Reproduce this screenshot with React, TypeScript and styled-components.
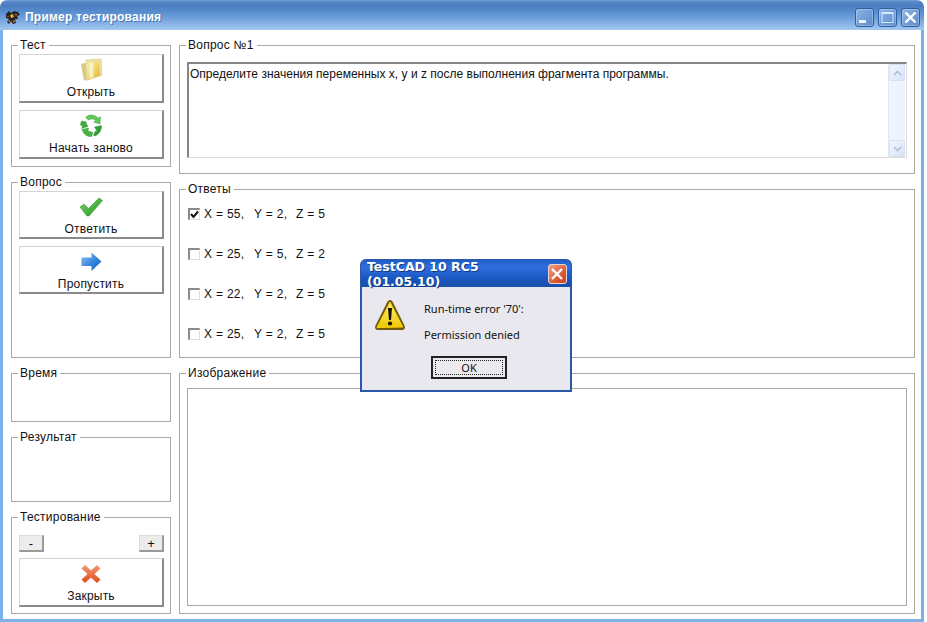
import React from "react";
import styled, { createGlobalStyle } from "styled-components";

const Global = createGlobalStyle`
  html, body { margin: 0; padding: 0; background: #fff; width: 927px; height: 622px; overflow: hidden; }
  * { box-sizing: border-box; }
`;

const Page = styled.div`
  position: relative;
  width: 927px;
  height: 622px;
  background: #fff;
  font-family: "Liberation Sans", Arial, sans-serif;
  font-size: 12px;
  color: #111;
`;

const Win = styled.div`
  width: 924px;
  height: 622px;
  display: flex;
  flex-direction: column;
  border-radius: 7px 7px 0 0;
  overflow: hidden;
  background: #fff;
`;

const TitleBar = styled.div`
  height: 30px;
  flex: none;
  display: flex;
  align-items: center;
  padding: 3px 4px 0 5px;
  background: linear-gradient(180deg, #5b8ccb 0%, #4a7cbe 15%, #5f93d3 45%, #84afe4 75%, #a4c6f0 100%);
  border-top: 1px solid #6f9ad4;
`;

const TitleText = styled.div`
  margin-left: 4px;
  flex: 1;
  font-weight: bold;
  font-size: 12px;
  color: #fff;
  text-shadow: 1px 1px 0 #4a78b4;
  letter-spacing: 0.22px;
`;

const CtlButton = styled.div`
  width: 19px;
  height: 19px;
  margin-left: 4px;
  border: 1px solid #2f5f9f;
  border-radius: 3px;
  background: linear-gradient(135deg, #8eb4e6 0%, #6f9bd8 60%, #5f8ccb 100%);
  box-shadow: inset 0 0 0 1px rgba(255, 255, 255, 0.25);
  display: flex;
  align-items: center;
  justify-content: center;
`;

const Body = styled.div`
  flex: 1;
  display: flex;
  gap: 8px;
  padding: 15px 6px 5px 8px;
  border-left: 3px solid #7db1ea;
  border-right: 3px solid #7db1ea;
  border-bottom: 3px solid #7db1ea;
  min-height: 0;
`;

const LeftCol = styled.div`
  width: 160px;
  display: flex;
  flex-direction: column;
  gap: 15px;
`;

const RightCol = styled.div`
  flex: 1;
  display: flex;
  flex-direction: column;
  gap: 15px;
`;

const Group = styled.section<{ $h: number }>`
  position: relative;
  height: ${(p) => p.$h}px;
  flex: none;
  border: 1px solid #a9a7a7;
`;

const Legend = styled.span`
  position: absolute;
  top: -8px;
  left: 6px;
  padding: 0 3px 0 2px;
  background: #fff;
  line-height: 14px;
  letter-spacing: 0.25px;
`;

const ButtonStack = styled.div`
  display: flex;
  flex-direction: column;
  gap: 7px;
  padding: 8px 6px 0 7px;
`;

const BigButton = styled.div<{ $h?: number }>`
  height: ${(p) => p.$h ?? 49}px;
  width: 145px;
  background: #fff;
  border-top: 1px solid #d4d4d4;
  border-left: 1px solid #d4d4d4;
  border-right: 2px solid #8a8a8a;
  border-bottom: 2px solid #8a8a8a;
  display: flex;
  flex-direction: column;
  align-items: center;
  padding-top: 3px;
  letter-spacing: 0.2px;
`;

const IconSlot = styled.div`
  height: 24px;
  display: flex;
  align-items: center;
  justify-content: center;
  margin-bottom: 3px;
`;

const TestBody = styled.div`
  padding: 17px 6px 0 7px;
  display: flex;
  flex-direction: column;
  gap: 6px;
`;

const PlusRow = styled.div`
  display: flex;
  justify-content: space-between;
  width: 145px;
`;

const SmallButton = styled.div`
  width: 25px;
  height: 17px;
  background: #ececec;
  border-top: 1px solid #dcdcdc;
  border-left: 1px solid #dcdcdc;
  border-right: 2px solid #9a9a9a;
  border-bottom: 2px solid #9a9a9a;
  display: flex;
  align-items: center;
  justify-content: center;
  font-size: 13px;
  line-height: 1;
`;

const QuestionBox = styled.div`
  margin: 16px 7px 0 7px;
  height: 96px;
  display: flex;
  border-top: 2px solid #858585;
  border-left: 2px solid #858585;
  border-right: 1px solid #dcdcdc;
  border-bottom: 1px solid #dcdcdc;
`;

const QuestionText = styled.div`
  flex: 1;
  padding: 3px 0 0 1px;
  line-height: 14px;
  letter-spacing: 0.01px;
`;

const Scrollbar = styled.div`
  width: 17px;
  margin-right: 1px;
  background: #eef4fd;
  display: flex;
  flex-direction: column;
  justify-content: space-between;
  border-left: 1px solid #dfe8f6;
`;

const ScrollBtn = styled.div`
  height: 17px;
  background: linear-gradient(135deg, #f2f6fd, #d6e3f7);
  border: 1px solid #d5e1f3;
  border-radius: 2px;
  display: flex;
  align-items: center;
  justify-content: center;
`;

const AnswerList = styled.div`
  padding: 4px 0 0 8px;
  display: flex;
  flex-direction: column;
`;

const AnswerRow = styled.div`
  height: 40px;
  display: flex;
  align-items: center;
  letter-spacing: 0.3px;
`;

const CheckBox = styled.div`
  width: 12px;
  height: 12px;
  margin-right: 4px;
  border-top: 2px solid #8a8a8a;
  border-left: 2px solid #8a8a8a;
  border-right: 1px solid #dedede;
  border-bottom: 1px solid #dedede;
  background: #fff;
  display: flex;
  align-items: center;
  justify-content: center;
`;

const Cell = styled.span<{ $w: number }>`
  width: ${(p) => p.$w}px;
  white-space: pre;
`;

const ImageBox = styled.div`
  margin: 14px 7px 0 7px;
  height: 218px;
  border: 1px solid #a9a7a7;
`;

const Dialog = styled.div`
  position: absolute;
  left: 360px;
  top: 259px;
  width: 212px;
  height: 133px;
  border: 2px solid #2a57a6;
  border-radius: 6px 6px 0 0;
  background: #e9e8ee;
  box-shadow: 0 0 0 0 transparent;
  display: flex;
  flex-direction: column;
  font-family: "Noto Sans", Tahoma, sans-serif;
`;

const DialogTitle = styled.div`
  height: 27px;
  flex: none;
  margin: -1px -1px 0;
  padding: 0 4px 0 6px;
  display: flex;
  align-items: center;
  justify-content: space-between;
  background: linear-gradient(180deg, #1f5bc4 0%, #2f6fe0 25%, #1a56c0 70%, #1a4fa8 100%);
  border-radius: 6px 6px 0 0;
  color: #fff;
  font-family: "DejaVu Sans", Verdana, sans-serif;
  font-weight: bold;
  font-size: 12.5px;
  text-shadow: 1px 1px 0 #123a80;
`;

const DialogClose = styled.div`
  width: 20px;
  height: 20px;
  border: 1px solid #e8d8d0;
  border-radius: 3px;
  background: linear-gradient(135deg, #eda08a, #d9532e 70%, #c8452a);
  display: flex;
  align-items: center;
  justify-content: center;
`;

const DialogBody = styled.div`
  flex: 1;
  display: flex;
  padding: 12px 0 0 12px;
`;

const MsgCol = styled.div`
  margin-left: 18px;
  font-size: 11px;
  line-height: 15px;
  display: flex;
  flex-direction: column;
  gap: 11px;
  padding-top: 2px;
  color: #111;
`;

const DialogFoot = styled.div`
  display: flex;
  justify-content: center;
  padding: 0 0 11px 6px;
`;

const OkButton = styled.div`
  width: 76px;
  height: 23px;
  border: 2px solid #222;
  background: #eceaee;
  padding: 2px;
  font-size: 11px;
`;

const OkInner = styled.div`
  height: 100%;
  border: 1px dotted #222;
  display: flex;
  align-items: center;
  justify-content: center;
`;

const WindowIcon = () => (
  <svg width="16" height="15" viewBox="0 0 16 15">
    <path d="M1 4 L4 1 L6 3 L9 1 L13 2 L15 5 L12 6 L13 9 L10 9 L11 13 L8 14 L6 11 L4 14 L2 12 L4 9 L1 8 Z" fill="#2a2220" />
    <path d="M5 5 L8 4 L9 7 L6 8 Z" fill="#d8b040" />
    <path d="M10 4 L12 4 L11 6 Z M3 11 L5 10 L5 12 Z M8 10 L10 11 L9 13 Z" fill="#c9a26a" />
    <path d="M2 6 L4 6 L4 7 L2 7 Z" fill="#b83a20" />
  </svg>
);

const FolderIcon = () => (
  <svg width="24" height="24" viewBox="0 0 24 24">
    <defs>
      <linearGradient id="fo" x1="0" y1="0" x2="1" y2="0.6">
        <stop offset="0" stopColor="#f6edc0" />
        <stop offset="0.55" stopColor="#f3e08a" />
        <stop offset="1" stopColor="#e7c23e" />
      </linearGradient>
    </defs>
    <path d="M7 2 L22 1 L23 17 L8 22 Z" fill="#efe0a2" stroke="#cdbb78" strokeWidth="0.5" />
    <path d="M2 6 L6 5 L7 4 L14 3 L14 5 L20 4 L21 18 L6 23 L4 20 Z" fill="url(#fo)" />
    <path d="M2 6 L7 5 L8 22 L5 22 Z" fill="#d8c98e" />
    <path d="M10 5 L14 4.5 L14.5 19 L10.5 20.5 Z" fill="#fbf6d8" opacity="0.8" />
  </svg>
);

const RecycleIcon = () => (
  <svg width="24" height="24" viewBox="0 0 24 24">
    <g fill="#3fae3c" stroke="#2c8a2c" strokeWidth="0.4">
      <path d="M9 1.5 C13 0.5 17 1.5 19 4 L21.5 2.8 L21 10 L14.5 8 L16.8 6.5 C15 4.6 12 4.5 9.5 6 L6.5 3.5 Z" fill="#63c957" />
      <path d="M2.8 7 L7.5 8 L7 9 L9 12.5 L2.5 14.5 L3.5 12 L1.5 11 C1.5 9.5 2 8 2.8 7 Z" fill="#3fae3c" />
      <path d="M3 15.5 L9.5 14 L9 17 L14 18.5 L12.5 22.5 C8 23 4.8 20.5 3 15.5 Z" fill="#44b53f" />
      <path d="M15.5 13 L22.5 11.5 C22.8 16 20 20.5 16 22 L14.5 21.5 L16 17.5 L18 17 Z" fill="#2f9e32" />
    </g>
  </svg>
);

const CheckIcon = () => (
  <svg width="24" height="20" viewBox="0 0 24 20">
    <defs>
      <linearGradient id="ck" x1="0" y1="0" x2="1" y2="1">
        <stop offset="0" stopColor="#7fcf5f" />
        <stop offset="1" stopColor="#1f9a25" />
      </linearGradient>
    </defs>
    <path d="M1 10 L5 7 L9.5 11.5 L20 1 L23.5 3.5 L10 19 L8 19 Z" fill="url(#ck)" stroke="#2a8a2a" strokeWidth="0.5" />
  </svg>
);

const ArrowIcon = () => (
  <svg width="21" height="20" viewBox="0 0 21 20">
    <defs>
      <linearGradient id="ar" x1="0" y1="0" x2="1" y2="1">
        <stop offset="0" stopColor="#8fc4f4" />
        <stop offset="0.6" stopColor="#2f7fdc" />
        <stop offset="1" stopColor="#1c5fb8" />
      </linearGradient>
    </defs>
    <path d="M0.5 5.5 L10.5 5.5 L10.5 0.5 L20.5 9.5 L10.5 19 L10.5 14 L0.5 14 Z" fill="url(#ar)" />
  </svg>
);

const CrossIcon = () => (
  <svg width="20" height="20" viewBox="0 0 20 20">
    <defs>
      <linearGradient id="cr" x1="0" y1="0" x2="0" y2="1">
        <stop offset="0" stopColor="#ef9a72" />
        <stop offset="1" stopColor="#e04a1c" />
      </linearGradient>
    </defs>
    <path d="M4 1 L10 6.5 L16 1 L19.5 4.5 L13.5 10 L19.5 15.5 L16 19 L10 13.5 L4 19 L0.5 15.5 L6.5 10 L0.5 4.5 Z" fill="url(#cr)" />
  </svg>
);

const WarnIcon = () => (
  <svg width="32" height="32" viewBox="0 0 32 32">
    <defs>
      <linearGradient id="wn" x1="0" y1="0" x2="0" y2="1">
        <stop offset="0" stopColor="#fff27a" />
        <stop offset="1" stopColor="#f0c800" />
      </linearGradient>
    </defs>
    <path d="M16 1 C17.5 1 18.5 2.5 19.5 4.5 L30.5 26.5 C31.5 29 30.5 31 28 31 L4 31 C1.5 31 0.5 29 1.5 26.5 L12.5 4.5 C13.5 2.5 14.5 1 16 1 Z" fill="#6f5a10" />
    <path d="M16 3 L28.8 28 L3 28.5 Z" fill="url(#wn)" stroke="#f4d20a" strokeWidth="1" strokeLinejoin="round" />
    <path d="M14 9 L18 9 L17 21 L15 21 Z" fill="#111" />
    <circle cx="16" cy="24.5" r="2.1" fill="#111" />
  </svg>
);

const Chevron = ({ up }: { up?: boolean }) => (
  <svg width="9" height="6" viewBox="0 0 9 6">
    <path d={up ? "M1 5 L4.5 1.5 L8 5" : "M1 1 L4.5 4.5 L8 1"} fill="none" stroke="#a9bedd" strokeWidth="1.6" />
  </svg>
);

const answers = [
  { x: "X = 55,", y: "Y = 2,", z: "Z = 5", checked: true },
  { x: "X = 25,", y: "Y = 5,", z: "Z = 2", checked: false },
  { x: "X = 22,", y: "Y = 2,", z: "Z = 5", checked: false },
  { x: "X = 25,", y: "Y = 2,", z: "Z = 5", checked: false },
];

export default function App() {
  return (
    <Page>
      <Global />
      <Win>
        <TitleBar>
          <WindowIcon />
          <TitleText>Пример тестирования</TitleText>
          <CtlButton>
            <svg width="13" height="13" viewBox="0 0 13 13">
              <rect x="1" y="9" width="7" height="3" fill="#fff" opacity="0.9" />
            </svg>
          </CtlButton>
          <CtlButton>
            <svg width="13" height="13" viewBox="0 0 13 13">
              <rect x="1" y="1.5" width="11" height="10" fill="none" stroke="#dbe8fa" strokeWidth="1" />
              <rect x="1" y="1" width="11" height="2" fill="#dbe8fa" />
            </svg>
          </CtlButton>
          <CtlButton>
            <svg width="13" height="13" viewBox="0 0 13 13">
              <path d="M1.5 1.5 L11.5 11.5 M11.5 1.5 L1.5 11.5" stroke="#fff" strokeWidth="2.4" />
            </svg>
          </CtlButton>
        </TitleBar>
        <Body>
          <LeftCol>
            <Group $h={122}>
              <Legend>Тест</Legend>
              <ButtonStack>
                <BigButton>
                  <IconSlot><FolderIcon /></IconSlot>
                  Открыть
                </BigButton>
                <BigButton>
                  <IconSlot><RecycleIcon /></IconSlot>
                  Начать заново
                </BigButton>
              </ButtonStack>
            </Group>
            <Group $h={176}>
              <Legend>Вопрос</Legend>
              <ButtonStack>
                <BigButton $h={48}>
                  <IconSlot><CheckIcon /></IconSlot>
                  Ответить
                </BigButton>
                <BigButton $h={48}>
                  <IconSlot><ArrowIcon /></IconSlot>
                  Пропустить
                </BigButton>
              </ButtonStack>
            </Group>
            <Group $h={49}>
              <Legend>Время</Legend>
            </Group>
            <Group $h={65}>
              <Legend>Результат</Legend>
            </Group>
            <Group $h={97}>
              <Legend>Тестирование</Legend>
              <TestBody>
                <PlusRow>
                  <SmallButton>-</SmallButton>
                  <SmallButton>+</SmallButton>
                </PlusRow>
                <BigButton $h={49}>
                  <IconSlot><CrossIcon /></IconSlot>
                  Закрыть
                </BigButton>
              </TestBody>
            </Group>
          </LeftCol>
          <RightCol>
            <Group $h={129}>
              <Legend>Вопрос №1</Legend>
              <QuestionBox>
                <QuestionText>
                  Определите значения переменных x, y и z после выполнения фрагмента программы.
                </QuestionText>
                <Scrollbar>
                  <ScrollBtn><Chevron up /></ScrollBtn>
                  <ScrollBtn><Chevron /></ScrollBtn>
                </Scrollbar>
              </QuestionBox>
            </Group>
            <Group $h={169}>
              <Legend>Ответы</Legend>
              <AnswerList>
                {answers.map((a, i) => (
                  <AnswerRow key={i}>
                    <CheckBox>
                      {a.checked && (
                        <svg width="9" height="9" viewBox="0 0 9 9">
                          <path d="M1 4 L3.5 7 L8 1.5" fill="none" stroke="#111" strokeWidth="2" />
                        </svg>
                      )}
                    </CheckBox>
                    <Cell $w={50}>{a.x}</Cell>
                    <Cell $w={42}>{a.y}</Cell>
                    <Cell $w={40}>{a.z}</Cell>
                  </AnswerRow>
                ))}
              </AnswerList>
            </Group>
            <Group $h={241}>
              <Legend>Изображение</Legend>
              <ImageBox />
            </Group>
          </RightCol>
        </Body>
      </Win>
      <Dialog>
        <DialogTitle>
          TestCAD 10 RC5 (01.05.10)
          <DialogClose>
            <svg width="14" height="14" viewBox="0 0 14 14">
              <path d="M2 2 L12 12 M12 2 L2 12" stroke="#fff" strokeWidth="2.4" />
            </svg>
          </DialogClose>
        </DialogTitle>
        <DialogBody>
          <WarnIcon />
          <MsgCol>
            <span>Run-time error '70':</span>
            <span>Permission denied</span>
          </MsgCol>
        </DialogBody>
        <DialogFoot>
          <OkButton><OkInner>OK</OkInner></OkButton>
        </DialogFoot>
      </Dialog>
    </Page>
  );
}
